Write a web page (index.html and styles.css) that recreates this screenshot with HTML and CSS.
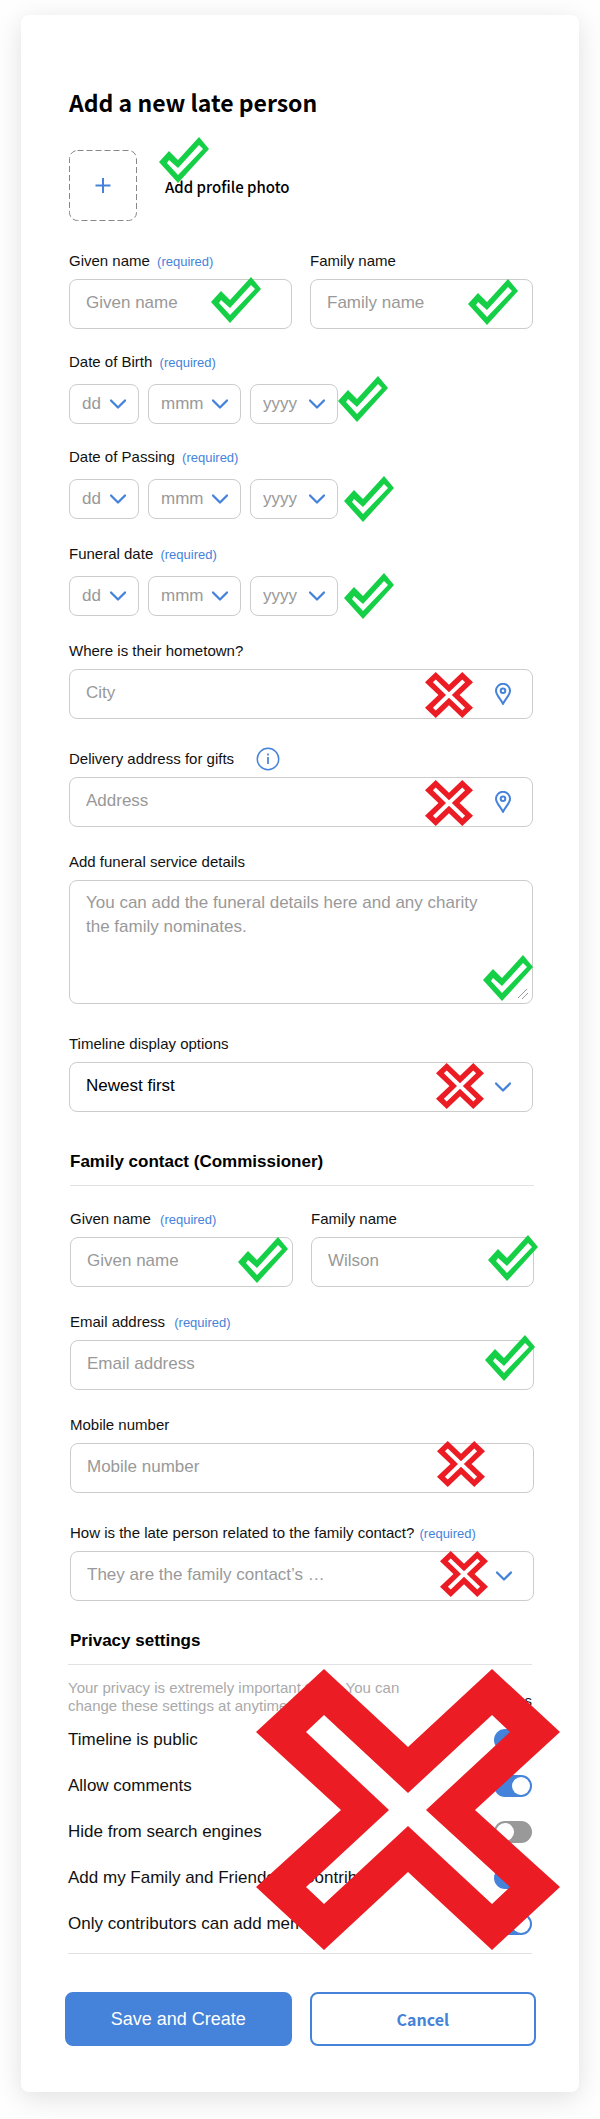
FILE: index.html
```html
<!DOCTYPE html>
<html lang="en">
<head>
<meta charset="utf-8">
<meta name="viewport" content="width=device-width, initial-scale=1">
<title>Add a new late person</title>
<link rel="stylesheet" href="styles.css">
</head>
<body>
<svg class="defs" aria-hidden="true">
  <symbol id="check" viewBox="0 0 50 46" preserveAspectRatio="none">
    <path fill="#15d046" fill-rule="evenodd" d="M40 0L50 12L19 46L0 25L10 14L19 23ZM40 8L19 31L10 23L8 26L19 38L44 12Z"/>
  </symbol>
  <symbol id="cross" viewBox="0 0 304 281" preserveAspectRatio="none">
    <path fill="#ec1c24" fill-rule="evenodd" d="M68 0L152 78L236 0L304 63L219 141L304 218L236 281L152 203L68 281L0 218L85 141L0 63ZM68 46L50 63L133 141L50 218L68 235L152 157L236 235L254 218L170 141L254 63L236 46L152 124Z"/>
  </symbol>
  <symbol id="chevron" viewBox="0 0 16 10">
    <path fill="none" stroke="#4582d9" stroke-width="2.300" stroke-linecap="round" stroke-linejoin="round" d="M1 1.500L8 8.500L15 1.500"/>
  </symbol>
  <symbol id="pin" viewBox="0 0 16 22">
    <path fill="none" stroke="#4582d9" stroke-width="2" stroke-linejoin="round" d="M8 21C6 16 1 12.500 1 7.800A7 7 0 0 1 15 7.800C15 12.500 10 16 8 21Z"/>
    <circle cx="8" cy="7.800" r="2.300" fill="none" stroke="#4582d9" stroke-width="2"/>
  </symbol>
</svg>
<form class="card">
  <section class="person">
    <h1 class="title">Add a new late person</h1>
    <div class="photo">
      <button class="photo-button" type="button" aria-labelledby="photo-text">
        <svg width="68" height="71" viewBox="0 0 68 71" aria-hidden="true">
          <rect x="0.500" y="0.500" width="67" height="70" rx="8" fill="none" stroke="#888" stroke-dasharray="6 3"/>
          <path d="M26.500 35.500H41.500M34 28V43" stroke="#4582d9" stroke-width="2"/>
        </svg>
      </button>
      <span class="photo-text" id="photo-text">Add profile photo</span>
      <svg class="mark check mark-photo"><use href="#check"/></svg>
    </div>

    <div class="pair gap-s">
      <div class="field">
        <label class="label" for="given">Given name <span class="required">(required)</span></label>
        <div class="control"><input class="box" id="given" type="text" placeholder="Given name"><svg class="mark check mark-given"><use href="#check"/></svg></div>
      </div>
      <div class="field">
        <label class="label" for="family">Family name</label>
        <div class="control"><input class="box" id="family" type="text" placeholder="Family name"><svg class="mark check mark-family"><use href="#check"/></svg></div>
      </div>
    </div>

    <div class="field gap-s">
      <label class="label" for="birth-day">Date of Birth <span class="required">(required)</span></label>
      <div class="dates">
        <div class="date day"><select class="box" id="birth-day"><option>dd</option></select><svg class="chevron"><use href="#chevron"/></svg></div>
        <div class="date month"><select class="box" aria-label="Birth month"><option>mmm</option></select><svg class="chevron"><use href="#chevron"/></svg></div>
        <div class="date year"><select class="box" aria-label="Birth year"><option>yyyy</option></select><svg class="chevron"><use href="#chevron"/></svg></div>
        <svg class="mark check mark-birth"><use href="#check"/></svg>
      </div>
    </div>

    <div class="field gap-m">
      <label class="label" for="passing-day">Date of Passing <span class="required">(required)</span></label>
      <div class="dates">
        <div class="date day"><select class="box" id="passing-day"><option>dd</option></select><svg class="chevron"><use href="#chevron"/></svg></div>
        <div class="date month"><select class="box" aria-label="Passing month"><option>mmm</option></select><svg class="chevron"><use href="#chevron"/></svg></div>
        <div class="date year"><select class="box" aria-label="Passing year"><option>yyyy</option></select><svg class="chevron"><use href="#chevron"/></svg></div>
        <svg class="mark check mark-date"><use href="#check"/></svg>
      </div>
    </div>

    <div class="field gap-m">
      <label class="label" for="funeral-day">Funeral date <span class="required">(required)</span></label>
      <div class="dates">
        <div class="date day"><select class="box" id="funeral-day"><option>dd</option></select><svg class="chevron"><use href="#chevron"/></svg></div>
        <div class="date month"><select class="box" aria-label="Funeral month"><option>mmm</option></select><svg class="chevron"><use href="#chevron"/></svg></div>
        <div class="date year"><select class="box" aria-label="Funeral year"><option>yyyy</option></select><svg class="chevron"><use href="#chevron"/></svg></div>
        <svg class="mark check mark-date"><use href="#check"/></svg>
      </div>
    </div>

    <div class="field gap-l">
      <label class="label" for="city">Where is their hometown?</label>
      <div class="control"><input class="box" id="city" type="text" placeholder="City"><svg class="pin"><use href="#pin"/></svg><svg class="mark cross mark-place"><use href="#cross"/></svg></div>
    </div>

    <div class="field gap-m">
      <div class="label-row">
        <label class="label" for="address">Delivery address for gifts</label>
        <button class="info" type="button" aria-label="About the delivery address">
          <svg width="24" height="24" viewBox="0 0 24 24" aria-hidden="true">
            <circle cx="12" cy="12" r="10.700" fill="none" stroke="#4582d9" stroke-width="1.500"/>
            <path d="M12 10V17M12 6.500V8.500" stroke="#4582d9" stroke-width="1.700"/>
          </svg>
        </button>
      </div>
      <div class="control"><input class="box" id="address" type="text" placeholder="Address"><svg class="pin"><use href="#pin"/></svg><svg class="mark cross mark-place"><use href="#cross"/></svg></div>
    </div>

    <div class="field gap-l">
      <label class="label" for="details">Add funeral service details</label>
      <div class="control">
        <textarea class="box area" id="details" placeholder="You can add the funeral details here and any charity the family nominates."></textarea>
        <svg class="mark check mark-details"><use href="#check"/></svg>
        <svg class="grip" viewBox="0 0 12 12" aria-hidden="true"><path d="M1 10L10 1M5 11L11 5" stroke="#999" stroke-width="1"/></svg>
      </div>
    </div>

    <div class="field">
      <label class="label" for="order">Timeline display options</label>
      <div class="control"><select class="box filled" id="order"><option>Newest first</option></select><svg class="chevron"><use href="#chevron"/></svg><svg class="mark cross mark-order"><use href="#cross"/></svg></div>
    </div>
  </section>

  <section class="contact">
    <h2 class="heading">Family contact (Commissioner)</h2>
    <hr class="rule">
    <div class="pair gap-m">
      <div class="field">
        <label class="label" for="contact-given">Given name <span class="required">(required)</span></label>
        <div class="control"><input class="box" id="contact-given" type="text" placeholder="Given name"><svg class="mark check mark-contact-given"><use href="#check"/></svg></div>
      </div>
      <div class="field">
        <label class="label" for="contact-family">Family name</label>
        <div class="control"><input class="box" id="contact-family" type="text" placeholder="Wilson"><svg class="mark check mark-contact-family"><use href="#check"/></svg></div>
      </div>
    </div>
    <div class="field gap-m">
      <label class="label" for="email">Email address <span class="required">(required)</span></label>
      <div class="control"><input class="box" id="email" type="email" placeholder="Email address"><svg class="mark check mark-email"><use href="#check"/></svg></div>
    </div>
    <div class="field gap-l">
      <label class="label" for="mobile">Mobile number</label>
      <div class="control"><input class="box" id="mobile" type="tel" placeholder="Mobile number"><svg class="mark cross mark-mobile"><use href="#cross"/></svg></div>
    </div>
    <div class="field">
      <label class="label question" for="relation">How is the late person related to the family contact? <span class="required">(required)</span></label>
      <div class="control"><select class="box" id="relation"><option>They are the family contact’s …</option></select><svg class="chevron"><use href="#chevron"/></svg><svg class="mark cross mark-relation"><use href="#cross"/></svg></div>
    </div>
  </section>

  <section class="privacy">
    <h2 class="heading">Privacy settings</h2>
    <hr class="rule">
    <div class="settings">
      <div class="notice">
        <p class="notice-text">Your privacy is extremely important to us. You can change these settings at anytime.</p>
        <span class="yes">Yes</span>
      </div>
      <label class="setting">Timeline is public<input class="toggle" type="checkbox" checked></label>
      <label class="setting">Allow comments<input class="toggle" type="checkbox" checked></label>
      <label class="setting">Hide from search engines<input class="toggle" type="checkbox"></label>
      <label class="setting">Add my Family and Friends as Contributors<input class="toggle" type="checkbox" checked></label>
      <label class="setting">Only contributors can add memories<input class="toggle" type="checkbox" checked></label>
      <svg class="mark mark-privacy"><use href="#cross"/></svg>
    </div>
    <hr class="rule">
  </section>

  <div class="actions">
    <button class="button save" type="submit">Save and Create</button>
    <button class="button cancel" type="button">Cancel</button>
  </div>
</form>
</body>
</html>
```

FILE: styles.css
```css
* {
  box-sizing: border-box;
}

body {
  margin: 0;
  padding: 15px 21px 26px;
  background: #fefefe;
  color: #111;
  font-family: "Liberation Sans", Arial, sans-serif;
  font-size: 17px;
  line-height: 24px;
}

.defs {
  position: absolute;
  width: 0;
  height: 0;
}

.card {
  padding: 69px 0 46px;
  border-radius: 8px;
  background: #fff;
  box-shadow: 0 6px 26px rgba(0, 0, 0, 0.12);
}

.person {
  padding: 0 46px 0 48px;
}

.contact {
  padding: 38px 45px 0 49px;
}

.privacy {
  padding: 28px 47px 0;
}

.title {
  margin: 0 0 30px;
  color: #000;
  font: bold 23px/36px "Noto Sans CJK JP", "Noto Sans", sans-serif;
}

.photo {
  position: relative;
  display: flex;
  align-items: center;
  gap: 28px;
  margin-bottom: 31px;
}

.photo-button,
.info {
  display: block;
  flex: none;
  padding: 0;
  border: 0;
  background: none;
}

.photo-button svg,
.info svg {
  display: block;
}

.photo-text {
  padding-top: 2px;
  color: #000;
  font: 500 15px/24px "Noto Sans CJK JP", "Noto Sans", sans-serif;
}

.pair {
  display: grid;
  grid-template-columns: 1fr 1fr;
  gap: 18px;
}

.gap-s {
  margin-bottom: 24px;
}

.gap-m {
  margin-bottom: 26px;
}

.gap-l {
  margin-bottom: 31px;
}

.label {
  display: block;
  margin-bottom: 9px;
  font-size: 15px;
  line-height: 18px;
}

.required {
  margin-left: 3px;
  color: #4582d9;
  font-size: 13px;
  line-height: 1;
}

.contact .required {
  margin-left: 5px;
}

.contact .question .required {
  margin-left: 1px;
}

.label-row {
  display: flex;
  align-items: flex-start;
  gap: 22px;
}

.info {
  margin: -3px 0;
}

.control,
.date {
  position: relative;
}

.box {
  display: block;
  width: 100%;
  height: 50px;
  margin: 0;
  padding: 0 16px 2px;
  border: 1px solid #ccc;
  border-radius: 8px;
  outline: 0;
  appearance: none;
  background: #fff;
  color: #999;
  font: inherit;
}

.box::placeholder {
  color: #999;
  opacity: 1;
}

.filled {
  color: #000;
}

.area {
  height: 124px;
  padding: 10px 32px 10px 16px;
  resize: none;
}

.dates {
  position: relative;
  display: flex;
  gap: 9px;
  margin-top: 13px;
}

.date .box {
  height: 40px;
  padding: 0 12px;
}

.day {
  width: 70px;
}

.month {
  width: 93px;
}

.year {
  width: 88px;
}

.chevron,
.pin,
.grip,
.mark {
  position: absolute;
  pointer-events: none;
}

.chevron {
  top: 20px;
  right: 22px;
  width: 16px;
  height: 10px;
}

.date .chevron {
  top: 15px;
  right: 13px;
}

.pin {
  top: 14px;
  right: 22px;
  width: 16px;
  height: 22px;
}

.grip {
  right: 4px;
  bottom: 4px;
  width: 12px;
  height: 12px;
}

.check {
  width: 50px;
  height: 46px;
}

.cross {
  width: 48px;
  height: 46px;
}

.mark-photo {
  top: -13px;
  left: 90px;
}

.mark-given {
  top: -2px;
  right: 31px;
}

.mark-family {
  top: 0;
  right: 15px;
}

.mark-birth {
  top: -8px;
  left: 269px;
}

.mark-date {
  top: -3px;
  left: 275px;
}

.mark-place {
  top: 3px;
  right: 60px;
}

.mark-details {
  right: 0;
  bottom: 3px;
}

.mark-order {
  top: 1px;
  right: 49px;
}

.mark-contact-given {
  top: 0;
  right: 5px;
}

.mark-contact-family {
  top: -2px;
  right: -4px;
}

.mark-email {
  top: -5px;
  right: -1px;
}

.mark-mobile {
  top: -2px;
  right: 49px;
}

.mark-relation {
  top: 0;
  right: 46px;
}

.mark-privacy {
  top: 4px;
  right: -28px;
  width: 304px;
  height: 281px;
}

.heading {
  margin: 0 0 11px;
  color: #000;
  font-size: 17px;
  line-height: 24px;
}

.privacy .heading {
  padding-left: 2px;
}

.rule {
  height: 1px;
  margin: 0;
  border: 0;
  background: #e2e2e2;
}

.contact .rule {
  margin-bottom: 24px;
}

.settings {
  position: relative;
  padding: 14px 0 6px;
}

.notice {
  display: flex;
  align-items: center;
  justify-content: space-between;
  margin-bottom: 2px;
  font-size: 15px;
  line-height: 18px;
}

.yes {
  padding-top: 8px;
}

.notice-text {
  max-width: 360px;
  margin: 0;
  color: #aaa;
}

.setting {
  display: flex;
  align-items: center;
  justify-content: space-between;
  height: 46px;
}

.toggle {
  display: flex;
  align-items: center;
  width: 38px;
  height: 22px;
  margin: 0;
  padding: 0 2px;
  border-radius: 11px;
  appearance: none;
  background: #999;
}

.toggle::before {
  width: 18px;
  height: 18px;
  border-radius: 50%;
  background: #fff;
  content: "";
}

.toggle:checked {
  justify-content: flex-end;
  background: #4582d9;
}

.actions {
  display: grid;
  grid-template-columns: 1fr 1fr;
  gap: 18px;
  padding: 38px 43px 0 44px;
}

.button {
  height: 54px;
  border: 2px solid #4582d9;
  border-radius: 8px;
  font: inherit;
}

.save {
  background: #4582d9;
  color: #fff;
  font-size: 18px;
}

.cancel {
  background: #fff;
  color: #4582d9;
  font: bold 16px/24px "Noto Sans CJK JP", "Noto Sans", sans-serif;
}
```
